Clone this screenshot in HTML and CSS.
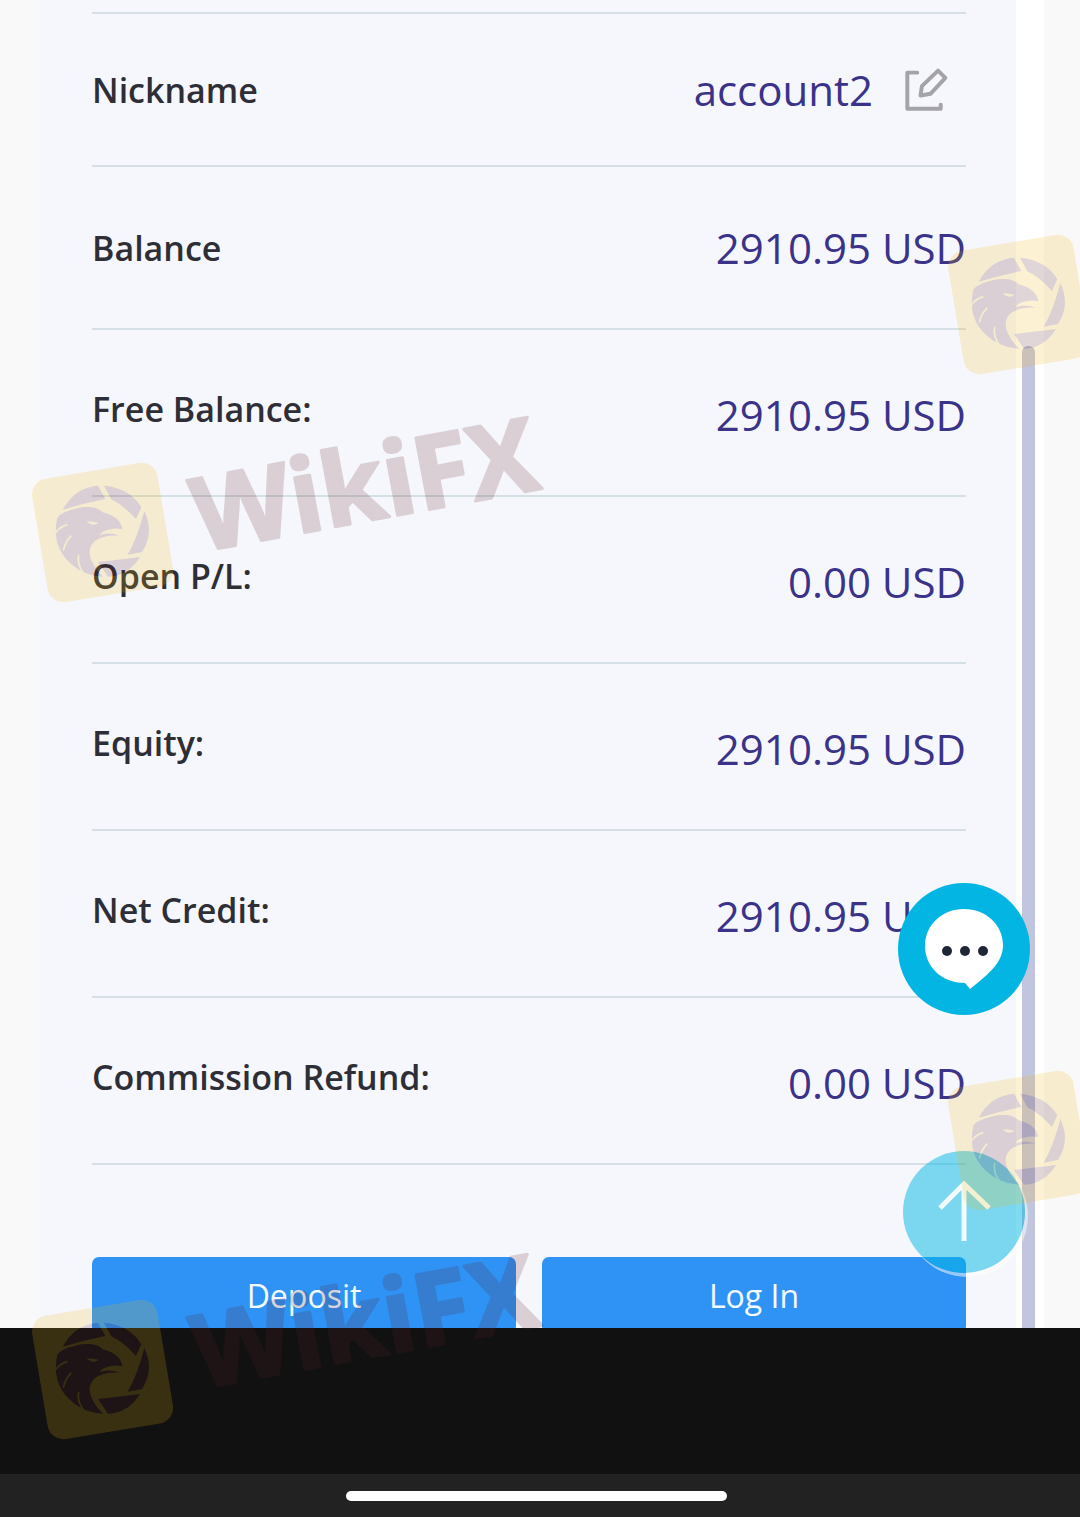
FILE: index.html
```
<!DOCTYPE html>
<html lang="en">
<head>
<meta charset="utf-8">
<meta name="viewport" content="width=device-width, initial-scale=1">
<title>Account details</title>
<link rel="stylesheet" href="styles.css">
</head>
<body>
<svg class="defs" aria-hidden="true">
  <symbol id="mark" viewBox="0 0 540 220">
    <rect x="19" y="70" width="127" height="125" rx="16" fill="#f0b914" transform="rotate(-9.5 83 132)"/>
    <g transform="translate(0 50) scale(.3333)">
      <g fill="#5a1e28">
        <path d="M128 179Q165 112 234 107L256 147Q190 160 128 179Z"/>
        <path d="M252 107Q330 114 364 172L348 207Q310 165 274 148Z"/>
        <path d="M373 183Q404 248 366 306L323 314Q352 265 373 183Z"/>
        <path d="M234 336Q305 328 360 321Q325 378 264 380Z"/>
        <path d="M112 203Q125 184 185 172Q230 166 248 187Q302 200 307 238Q285 232 258 241Q240 248 240 256Q262 244 300 257Q250 254 224 274Q200 296 214 330Q226 360 250 380Q190 378 147 336Q94 284 112 203Z"/>
      </g>
      <g fill="none" stroke="#f0b914" stroke-width="5">
        <path d="M107 248Q120 230 142 224M130 302Q134 278 154 257M192 371Q170 344 176 314"/>
        <path d="M202 215Q218 229 234 219Q218 215 202 215Z" fill="#f0b914" stroke-width="2"/>
      </g>
    </g>
  </symbol>
</svg>

<div class="page">
  <main class="view">
    <section class="card">
      <dl class="details">
        <div class="row row-name">
          <dt>Nickname</dt>
          <dd>account2
            <button class="edit" type="button" aria-label="Edit nickname">
              <svg viewBox="45 37 130 130" fill="none" stroke="#a3a3a8" stroke-width="12" stroke-linejoin="round" stroke-linecap="round"><path d="M82 51H52V160H153V148M145 45L167 67L122 115L92 120L96 92Z"/></svg>
            </button>
          </dd>
        </div>
        <div class="row row-total"><dt>Balance</dt><dd>2910.95 USD</dd></div>
        <div class="row"><dt>Free Balance:</dt><dd>2910.95 USD</dd></div>
        <div class="row"><dt>Open P/L:</dt><dd>0.00 USD</dd></div>
        <div class="row"><dt>Equity:</dt><dd>2910.95 USD</dd></div>
        <div class="row"><dt>Net Credit:</dt><dd>2910.95 USD</dd></div>
        <div class="row"><dt>Commission Refund:</dt><dd>0.00 USD</dd></div>
      </dl>
      <div class="actions">
        <button type="button">Deposit</button>
        <button type="button">Log In</button>
      </div>
    </section>
    <div class="scroll"><div class="thumb"></div></div>
  </main>
  <footer>
    <div class="blank"></div>
    <div class="home"><div class="pill"></div></div>
  </footer>

  <button class="float chat" type="button" aria-label="Chat">
    <svg viewBox="0 0 132 132"><path fill="#fff" d="M66 26C88 26 105 42 105 62C105 79 92 90 72 106L67 100C43 100 27 83 27 63C27 42 44 26 66 26Z"/><g fill="#1d2738"><circle cx="49" cy="68" r="5"/><circle cx="67" cy="68" r="5"/><circle cx="85" cy="68" r="5"/></g></svg>
  </button>
  <button class="float top" type="button" aria-label="Back to top">
    <svg viewBox="0 0 122 122" fill="none" stroke="#f4fdfd" stroke-width="5"><path d="M61 90V33M37 57L61 33L86 57"/></svg>
  </button>

  <div class="marks" aria-hidden="true">
    <svg class="mark left upper"><use href="#mark"/><text class="mark-name" x="180" y="152" transform="rotate(-10.5 180 152)">WikiFX</text></svg>
    <svg class="mark right upper"><use href="#mark"/></svg>
    <svg class="mark left lower"><use href="#mark"/><text class="mark-name" x="180" y="152" transform="rotate(-10.5 180 152)">WikiFX</text></svg>
    <svg class="mark right lower"><use href="#mark"/></svg>
  </div>
</div>
</body>
</html>
```
FILE: styles.css
```
* { box-sizing: border-box; }

body {
  margin: 0;
  background: #f9f9f9;
  font-family: "Open Sans", "Noto Sans", sans-serif;
}

button {
  border: 0;
  padding: 0;
  font: inherit;
  cursor: pointer;
}

.defs { position: absolute; width: 0; height: 0; }

.page {
  position: relative;
  display: flex;
  flex-direction: column;
  height: 100vh;
  overflow: hidden;
}

/* Account card and its scroll track */
.view {
  flex: 1;
  min-height: 0;
  display: flex;
  padding: 0 36px 0 40px;
  overflow: hidden;
}

.card {
  flex: 1;
  padding: 12px 50px 0 52px;
  background: #f6f7fc;
}

.details {
  margin: 0;
  border-top: 2px solid #d5dfe6;
}

.row {
  display: flex;
  align-items: center;
  justify-content: space-between;
  height: 167px;
  border-bottom: 2px solid #d5dfe6;
}

.row dt {
  padding-bottom: 7px;
  font-size: 34px;
  font-weight: 600;
  color: #2e2e36;
}

.row dd {
  display: flex;
  align-items: center;
  gap: 32px;
  margin: 0;
  padding-top: 3px;
  font-size: 42px;
  color: #3a3389;
}

.row-name { height: 153px; }
.row-total { height: 163px; }
.row-name dt, .row-total dt { padding-bottom: 0; }
.row-name dd, .row-total dd { padding-top: 0; }

.edit {
  display: flex;
  margin-right: 18px;
  background: none;
}

.edit svg { width: 43px; height: 43px; overflow: visible; }

.actions {
  display: grid;
  grid-template-columns: 1fr 1fr;
  gap: 26px;
  padding-top: 92px;
}

.actions button {
  height: 76px;
  border-radius: 7px;
  background: #2e93f5;
  font-size: 32px;
  color: #f4fcff;
}

.scroll {
  display: flex;
  width: 28px;
  padding: 346px 9px 0 6px;
  background: #fff;
}

.thumb {
  flex: 1;
  border-radius: 6px 6px 0 0;
  background: #c2c5de;
}

/* System area under the page */
.blank { height: 146px; background: #111; }

.home {
  display: flex;
  align-items: center;
  justify-content: center;
  height: 43px;
  padding-right: 7px;
  background: #222;
}

.pill {
  width: 381px;
  height: 10px;
  border-radius: 5px;
  background: #fff;
}

/* Floating buttons */
.float { position: absolute; border-radius: 50%; }
.float svg { display: block; width: 100%; }

.chat {
  top: 883px;
  right: 50px;
  width: 132px;
  height: 132px;
  background: #02b5e2;
}

.top {
  top: 1151px;
  right: 55px;
  width: 122px;
  height: 122px;
  background: rgba(0, 184, 226, .5);
  box-shadow: 3px 4px 0 rgba(255, 255, 255, .5);
}

/* Watermarks */
.marks {
  position: absolute;
  inset: 0;
  overflow: hidden;
  pointer-events: none;
}

.mark {
  position: absolute;
  width: 540px;
  height: 220px;
  overflow: visible;
  opacity: .18;
}

.mark.left { left: 20px; top: 400px; }
.mark.right { left: 936px; top: 172px; }
.mark.left.lower { top: 1237px; }
.mark.right.lower { top: 1008px; }

.mark-name {
  font-size: 102px;
  font-weight: 700;
  fill: #5a1e28;
  stroke: #5a1e28;
  stroke-width: 3px;
  stroke-linejoin: round;
}
```
